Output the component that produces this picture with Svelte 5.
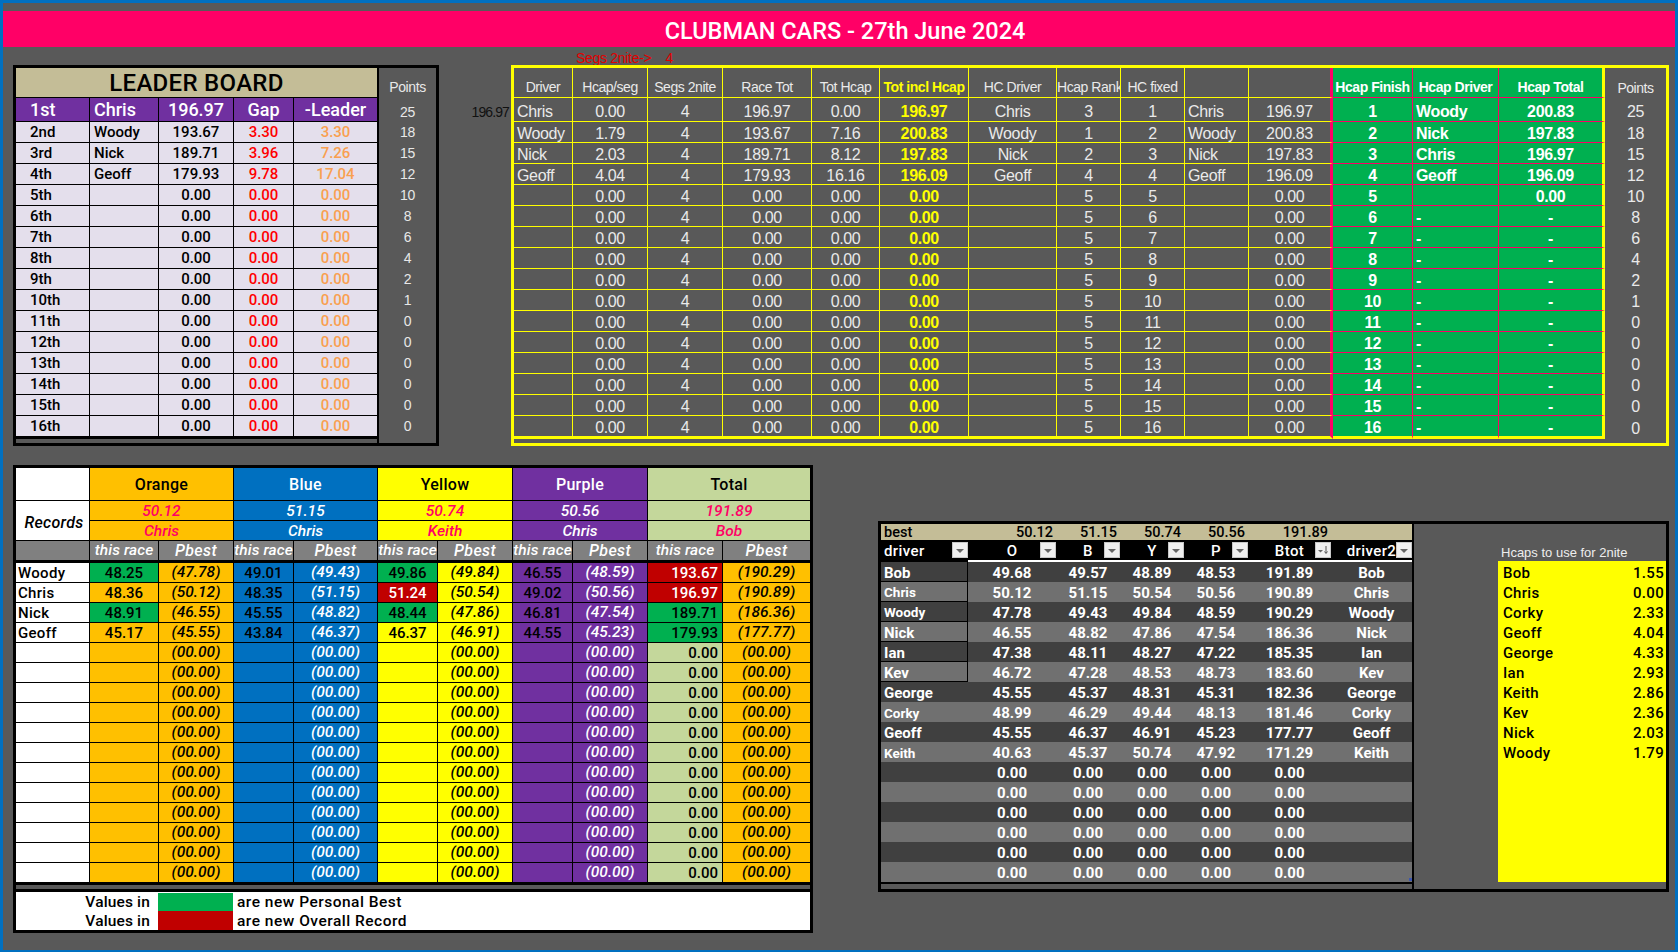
<script lang="ts">
    const names = ['Chris', 'Woody', 'Nick', 'Geoff']
    const pad = <T,>(list: T[], filler: T, size = 16): T[] => [...list, ...Array(size - list.length).fill(filler)]
    const points = [25, 18, 15, 12, 10, 8, 6, 4, 2, 1, 0, 0, 0, 0, 0, 0]
    const ordinals = ['2nd', '3rd', '4th', '5th', '6th', '7th', '8th', '9th', '10th', '11th', '12th', '13th', '14th', '15th', '16th']

    const leaders = pad(
        [
            ['Woody', '193.67', '3.30', '3.30'],
            ['Nick', '189.71', '3.96', '7.26'],
            ['Geoff', '179.93', '9.78', '17.04']
        ],
        ['', '0.00', '0.00', '0.00'],
        15
    )

    const hcapRows = pad(
        [
            { seg: '0.00', race: '196.97', tot: '0.00', incl: '196.97', rank: 3, sorted: '196.97', fin: 'Woody', finTot: '200.83' },
            { seg: '1.79', race: '193.67', tot: '7.16', incl: '200.83', rank: 1, sorted: '200.83', fin: 'Nick', finTot: '197.83' },
            { seg: '2.03', race: '189.71', tot: '8.12', incl: '197.83', rank: 2, sorted: '197.83', fin: 'Chris', finTot: '196.97' },
            { seg: '4.04', race: '179.93', tot: '16.16', incl: '196.09', rank: 4, sorted: '196.09', fin: 'Geoff', finTot: '196.09' },
            { seg: '0.00', race: '0.00', tot: '0.00', incl: '0.00', rank: 5, sorted: '0.00', fin: '', finTot: '0.00' }
        ],
        { seg: '0.00', race: '0.00', tot: '0.00', incl: '0.00', rank: 5, sorted: '0.00', fin: '-', finTot: '-' }
    )

    const hcapHeads = ['Driver', 'Hcap/seg', 'Segs 2nite', 'Race Tot', 'Tot Hcap', 'Tot incl Hcap', 'HC Driver', 'Hcap Rank', 'HC fixed', '', '']

    const tracks = [
        { key: 'orange', label: 'Orange', record: '50.12', holder: 'Chris' },
        { key: 'blue', label: 'Blue', record: '51.15', holder: 'Chris' },
        { key: 'yellow', label: 'Yellow', record: '50.74', holder: 'Keith' },
        { key: 'purple', label: 'Purple', record: '50.56', holder: 'Chris' },
        { key: 'total', label: 'Total', record: '191.89', holder: 'Bob' }
    ]

    // g = new personal best, r = new overall record
    const raceRows = pad(
        [
            { name: 'Woody', cells: [['48.25', 'g', '(47.78)'], ['49.01', '', '(49.43)'], ['49.86', 'g', '(49.84)'], ['46.55', '', '(48.59)'], ['193.67', 'r', '(190.29)']] },
            { name: 'Chris', cells: [['48.36', '', '(50.12)'], ['48.35', '', '(51.15)'], ['51.24', 'r', '(50.54)'], ['49.02', '', '(50.56)'], ['196.97', 'r', '(190.89)']] },
            { name: 'Nick', cells: [['48.91', 'g', '(46.55)'], ['45.55', '', '(48.82)'], ['48.44', 'g', '(47.86)'], ['46.81', '', '(47.54)'], ['189.71', 'g', '(186.36)']] },
            { name: 'Geoff', cells: [['45.17', '', '(45.55)'], ['43.84', '', '(46.37)'], ['46.37', '', '(46.91)'], ['44.55', '', '(45.23)'], ['179.93', 'g', '(177.77)']] }
        ],
        { name: '', cells: [['', '', '(00.00)'], ['', '', '(00.00)'], ['', '', '(00.00)'], ['', '', '(00.00)'], ['0.00', '', '(00.00)']] }
    )

    const bestHeads = ['O', 'B', 'Y', 'P', 'Btot']
    const bestValues = ['50.12', '51.15', '50.74', '50.56', '191.89']
    const bestRows = pad(
        [
            { name: 'Bob', vals: ['49.68', '49.57', '48.89', '48.53', '191.89'], boxed: true },
            { name: 'Chris', vals: ['50.12', '51.15', '50.54', '50.56', '190.89'], boxed: true, small: true },
            { name: 'Woody', vals: ['47.78', '49.43', '49.84', '48.59', '190.29'], boxed: true, small: true },
            { name: 'Nick', vals: ['46.55', '48.82', '47.86', '47.54', '186.36'], boxed: true },
            { name: 'Ian', vals: ['47.38', '48.11', '48.27', '47.22', '185.35'], boxed: true },
            { name: 'Kev', vals: ['46.72', '47.28', '48.53', '48.73', '183.60'], boxed: true },
            { name: 'George', vals: ['45.55', '45.37', '48.31', '45.31', '182.36'] },
            { name: 'Corky', vals: ['48.99', '46.29', '49.44', '48.13', '181.46'], small: true },
            { name: 'Geoff', vals: ['45.55', '46.37', '46.91', '45.23', '177.77'] },
            { name: 'Keith', vals: ['40.63', '45.37', '50.74', '47.92', '171.29'], small: true }
        ],
        { name: '', vals: ['0.00', '0.00', '0.00', '0.00', '0.00'] }
    )

    const hcaps = [
        ['Bob', '1.55'], ['Chris', '0.00'], ['Corky', '2.33'], ['Geoff', '4.04'], ['George', '4.33'],
        ['Ian', '2.93'], ['Keith', '2.86'], ['Kev', '2.36'], ['Nick', '2.03'], ['Woody', '1.79']
    ]
</script>

{#snippet filter(sorted = false)}
    <span class="filter">
        <svg width="14" height="14" viewBox="0 0 14 14">
            {#if sorted}
                <path d="M2 7h5L4.5 9.5z" fill="#666" />
                <path d="M10 3v7M8.5 8.5 10 10.5l1.5-2" fill="none" stroke="#555" stroke-width="1" />
            {:else}
                <path d="M3 6h8L7 10z" fill="#666" />
            {/if}
        </svg>
    </span>
{/snippet}

<main class="sheet">
    <header class="title">CLUBMAN CARS - 27th June 2024</header>
    <div class="segs"><span>Segs 2nite-&gt;</span><span class="segs-count">4</span></div>

    <section class="top-row">
        <div class="board">
            <div class="board-main">
                <table class="grid leader">
                    <colgroup><col /><col /><col /><col /><col /></colgroup>
                    <tbody>
                        <tr class="leader-title"><td colspan="5">LEADER BOARD</td></tr>
                        <tr class="leader-first">
                            <td class="pos">1st</td><td class="who">Chris</td><td>196.97</td><td>Gap</td><td>-Leader</td>
                        </tr>
                        {#each leaders as row, i}
                            <tr>
                                <td class="pos">{ordinals[i]}</td>
                                <td class="who">{row[0]}</td>
                                <td>{row[1]}</td>
                                <td class="gap">{row[2]}</td>
                                <td class="behind">{row[3]}</td>
                            </tr>
                        {/each}
                    </tbody>
                </table>
            </div>
            <div class="points">
                <div class="points-head">Points</div>
                {#each points as p, i}
                    <div class="points-cell" class:first={i === 0}>{p}</div>
                {/each}
            </div>
        </div>

        <div class="stray">196.97</div>

        <div class="hcap">
            <table class="grid hcap-table">
                <colgroup>
                    <col /><col /><col /><col /><col /><col /><col /><col /><col /><col /><col /><col /><col /><col /><col />
                </colgroup>
                <tbody>
                    <tr class="hcap-head">
                        {#each hcapHeads as head, i}
                            <td class:hot={i === 5}>{head}</td>
                        {/each}
                        <td class="fin">Hcap Finish</td>
                        <td class="fin">Hcap Driver</td>
                        <td class="fin">Hcap Total</td>
                        <td class="pts">Points</td>
                    </tr>
                    {#each hcapRows as row, i}
                        <tr class:first={i === 0}>
                            <td class="left">{names[i] ?? ''}</td>
                            <td>{row.seg}</td>
                            <td>4</td>
                            <td>{row.race}</td>
                            <td>{row.tot}</td>
                            <td class="hot">{row.incl}</td>
                            <td>{names[i] ?? ''}</td>
                            <td>{row.rank}</td>
                            <td>{i + 1}</td>
                            <td class="left">{names[i] ?? ''}</td>
                            <td>{row.sorted}</td>
                            <td class="fin">{i + 1}</td>
                            <td class="fin left">{row.fin}</td>
                            <td class="fin">{row.finTot}</td>
                            <td class="pts">{points[i]}</td>
                        </tr>
                    {/each}
                </tbody>
            </table>
        </div>
    </section>

    <section class="bottom-row">
        <div class="records">
            <table class="grid race">
                <colgroup>
                    <col /><col /><col /><col /><col /><col /><col /><col /><col /><col /><col />
                </colgroup>
                <tbody>
                    <tr class="track-head">
                        <td></td>
                        {#each tracks as t}
                            <td colspan="2" class={t.key}>{t.label}</td>
                        {/each}
                    </tr>
                    <tr class="track-record">
                        <td rowspan="2" class="records-label">Records</td>
                        {#each tracks as t}
                            <td colspan="2" class={t.key}>{t.record}</td>
                        {/each}
                    </tr>
                    <tr class="track-record">
                        {#each tracks as t}
                            <td colspan="2" class={t.key}>{t.holder}</td>
                        {/each}
                    </tr>
                    <tr class="sub-head">
                        <td></td>
                        {#each tracks as t}
                            <td class="sub-now">this race</td><td>Pbest</td>
                        {/each}
                    </tr>
                    {#each raceRows as row}
                        <tr class="race-row">
                            <td class="racer">{row.name}</td>
                            {#each tracks as t, k}
                                <td class="{t.key} now" class:pb={row.cells[k][1] === 'g'} class:rec={row.cells[k][1] === 'r'}>{row.cells[k][0]}</td>
                                <td class="{k === 4 ? 'orange' : t.key} best">{row.cells[k][2]}</td>
                            {/each}
                        </tr>
                    {/each}
                </tbody>
            </table>
            <div class="strip"></div>
            <div class="legend">
                <div class="legend-row">
                    <span class="legend-label">Values in</span><span class="swatch green"></span><span>are new Personal Best</span>
                </div>
                <div class="legend-row">
                    <span class="legend-label">Values in</span><span class="swatch red"></span><span>are new Overall Record</span>
                </div>
            </div>
        </div>

        <div class="bests">
            <div class="bests-main">
                <table class="grid best-table">
                    <colgroup><col /><col /><col /><col /><col /><col /><col /></colgroup>
                    <tbody>
                        <tr class="best-top">
                            <td class="left">best</td>
                            {#each bestValues as v}<td>{v}</td>{/each}
                            <td></td>
                        </tr>
                        <tr class="best-head">
                            <td class="left">driver{@render filter()}</td>
                            {#each bestHeads as head}
                                <td>{head}{@render filter(head === 'Btot')}</td>
                            {/each}
                            <td>driver2{@render filter()}</td>
                        </tr>
                        {#each bestRows as row}
                            <tr class="best-row">
                                <td class="left" class:boxed={row.boxed} class:small={row.small}>{row.name}</td>
                                {#each row.vals as v}<td>{v}</td>{/each}
                                <td>{row.name}</td>
                            </tr>
                        {/each}
                    </tbody>
                </table>
                <span class="resize-handle"></span>
            </div>
            <div class="hcaps">
                <div class="hcaps-label">Hcaps to use for 2nite</div>
                <div class="hcaps-list">
                    {#each hcaps as [name, value]}
                        <div class="hcaps-row"><span>{name}</span><span>{value}</span></div>
                    {/each}
                </div>
            </div>
        </div>
    </section>
</main>

<style>
    :global(body) {
        margin: 0;
        background: #595959;
    }

    .sheet {
        box-sizing: border-box;
        width: 1678px;
        height: 952px;
        border: solid #0070c0;
        border-width: 3px 3px 2px 3px;
        background: #595959;
        font-family: Roboto, 'Liberation Sans', sans-serif;
        overflow: hidden;
    }

    .title {
        box-sizing: border-box;
        height: 36px;
        margin-top: 8px;
        padding-left: 12px;
        background: #ff0066;
        color: #fff;
        font-size: 23.5px;
        font-weight: 500;
        line-height: 40px;
        overflow: hidden;
        text-align: center;
    }

    .segs {
        display: flex;
        height: 18px;
        padding-left: 573px;
        color: #e00000;
        font-family: 'Liberation Sans', sans-serif;
        font-size: 14px;
        letter-spacing: -0.3px;
        line-height: 22px;
    }

    .segs-count {
        margin-left: 14px;
    }

    .top-row,
    .bottom-row {
        display: flex;
        align-items: flex-start;
        padding-left: 10px;
    }

    .bottom-row {
        margin-top: 19px;
    }

    /* shared spreadsheet table */
    .grid {
        table-layout: fixed;
        border-collapse: separate;
        border-spacing: 0;
    }

    .grid td {
        box-sizing: border-box;
        padding: 0;
        overflow: hidden;
        line-height: 1;
        text-align: center;
        vertical-align: middle;
        white-space: nowrap;
    }

    .grid .left {
        padding-left: 3px;
        text-align: left;
    }

    /* leader board */
    .board {
        display: flex;
        box-sizing: border-box;
        width: 426px;
        height: 381px;
        border: 3px solid #000;
    }

    .board-main {
        width: 361px;
        height: 371px;
    }

    .leader {
        width: 361px;
        background: #e4dfec;
        color: #000;
        font-size: 15px;
        font-weight: 500;
    }

    .leader col:nth-child(1) { width: 74px; }
    .leader col:nth-child(2) { width: 69px; }
    .leader col:nth-child(3) { width: 75px; }
    .leader col:nth-child(4) { width: 60px; }
    .leader col:nth-child(5) { width: 83px; }

    .leader td {
        height: 21px;
        padding-top: 1px;
        border-right: 1px solid #000;
        border-bottom: 1px solid #000;
    }

    .leader td:last-child {
        border-right: 0;
    }

    .leader tr:last-child td {
        height: 23px;
        border-bottom-width: 3px;
    }

    .leader .pos {
        padding-left: 14px;
        text-align: left;
    }

    .leader .who {
        padding-left: 4px;
        text-align: left;
    }

    .leader .gap {
        color: #ff0000;
    }

    .leader .behind {
        color: #f9a050;
    }

    .leader-title td {
        height: 30px;
        background: #c4bd97;
        font-size: 24px;
        font-weight: 500;
        letter-spacing: 0.3px;
    }

    .leader-first td {
        height: 24px;
        background: #7030a0;
        color: #fff;
        font-size: 18px;
    }

    .points {
        box-sizing: border-box;
        width: 60px;
        margin-left: 0;
        border-left: 2px solid #000;
        color: #e8e8e8;
        font-family: 'Liberation Sans', sans-serif;
        font-size: 14px;
        letter-spacing: -0.4px;
        text-align: center;
    }

    .points-head {
        height: 30px;
        line-height: 38px;
    }

    .points-cell {
        height: 21px;
        line-height: 21px;
    }

    .points-cell.first {
        height: 24px;
        line-height: 28px;
    }

    .stray {
        box-sizing: border-box;
        width: 72px;
        padding: 39px 2px 0 0;
        color: #111;
        font-family: 'Liberation Sans', sans-serif;
        font-size: 14px;
        letter-spacing: -0.9px;
        text-align: right;
    }

    /* handicap board */
    .hcap {
        box-sizing: border-box;
        width: 1158px;
        height: 381px;
        border: 3px solid #ffff00;
    }

    .hcap-table {
        width: 1152px;
        color: #eaeaea;
        font-family: 'Liberation Sans', sans-serif;
        font-size: 16px;
        letter-spacing: -0.35px;
    }

    .hcap-table col:nth-child(1) { width: 59px; }
    .hcap-table col:nth-child(2) { width: 75px; }
    .hcap-table col:nth-child(3) { width: 75px; }
    .hcap-table col:nth-child(4) { width: 89px; }
    .hcap-table col:nth-child(5) { width: 68px; }
    .hcap-table col:nth-child(6) { width: 89px; }
    .hcap-table col:nth-child(7) { width: 88px; }
    .hcap-table col:nth-child(8) { width: 64px; }
    .hcap-table col:nth-child(9) { width: 64px; }
    .hcap-table col:nth-child(10) { width: 64px; }
    .hcap-table col:nth-child(11) { width: 84px; }
    .hcap-table col:nth-child(12) { width: 80px; }
    .hcap-table col:nth-child(13) { width: 86px; }
    .hcap-table col:nth-child(14) { width: 106px; }
    .hcap-table col:nth-child(15) { width: 61px; }

    .hcap-table td {
        height: 21px;
        padding-top: 3px;
        border-right: 1px solid #ffff00;
        border-bottom: 1px solid #ffff00;
    }

    .hcap-table tr:last-child td {
        height: 23px;
        border-bottom-width: 3px;
    }

    .hcap-table td:nth-child(11) {
        border-right: 3px solid #ff0066;
    }

    .hcap-table tr:last-child td:nth-child(11) {
        border-bottom-color: #ffff00;
    }

    .hcap-table .fin {
        border-color: #ff0066;
        background: #00b050;
        color: #fff;
        font-weight: 700;
    }

    .hcap-table td.fin:nth-child(14) {
        border-right: 3px solid #ffff00;
    }

    .hcap-table tr:last-child .fin {
        border-bottom-color: #ffff00;
    }

    .hcap-table td.pts,
    .hcap-table tr:last-child td.pts {
        border: 0;
    }

    .hcap-table .hot {
        color: #ffff00;
        font-weight: 700;
    }

    .hcap-table .hcap-head td {
        height: 30px;
        padding-top: 9px;
        font-size: 14px;
        letter-spacing: -0.45px;
    }

    .hcap-table .first td {
        height: 24px;
        padding-top: 4px;
    }

    /* records table */
    .records {
        box-sizing: border-box;
        width: 800px;
        height: 468px;
        border: 3px solid #000;
        background: #fff;
    }

    .race {
        width: 794px;
        color: #000;
        font-size: 15px;
        font-weight: 500;
    }

    .race col:nth-child(1) { width: 74px; }
    .race col:nth-child(2) { width: 69px; }
    .race col:nth-child(3) { width: 75px; }
    .race col:nth-child(4) { width: 60px; }
    .race col:nth-child(5) { width: 84px; }
    .race col:nth-child(6) { width: 60px; }
    .race col:nth-child(7) { width: 75px; }
    .race col:nth-child(8) { width: 60px; }
    .race col:nth-child(9) { width: 75px; }
    .race col:nth-child(10) { width: 75px; }
    .race col:nth-child(11) { width: 87px; }

    .race td {
        height: 20px;
        padding-top: 1px;
        border-right: 1px solid #000;
        border-bottom: 1px solid #000;
    }

    .race td:last-child {
        border-right: 0;
    }

    .race .orange { background: #ffc000; }
    .race .blue { background: #0070c0; }
    .race .yellow { background: #ffff00; }
    .race .purple { background: #7030a0; }
    .race .total { background: #c4d79b; }

    .race tr:last-child td {
        height: 22px;
        border-bottom-width: 3px;
    }

    .track-head td {
        height: 33px;
        font-size: 16px;
        letter-spacing: 0.3px;
    }

    .track-head .blue,
    .track-head .purple {
        color: #fff;
    }

    .race .track-record td {
        padding-top: 3px;
        color: #ff0066;
        font-size: 15.5px;
        font-style: italic;
    }

    .race .track-record .blue,
    .race .track-record .purple {
        color: #fff;
    }

    .race .track-record .records-label {
        padding: 4px 0 0 3px;
        background: #fff;
        color: #000;
        font-size: 16px;
        letter-spacing: 0.3px;
    }

    .sub-head td {
        height: 22px;
        border-bottom-width: 3px;
        background: #808080;
        color: #fff;
        font-size: 16px;
        font-style: italic;
        letter-spacing: 0.4px;
    }

    /* keeps the wider text inside its 60px columns */
    .race .sub-head .sub-now {
        font-size: 15.5px;
        letter-spacing: 0.1px;
    }

    .race .racer {
        padding-left: 2px;
        text-align: left;
        letter-spacing: 0.3px;
    }

    .race .best {
        font-size: 15.5px;
        font-style: italic;
    }

    .race .blue.best,
    .race .purple.best {
        color: #fff;
    }

    .race .total.now {
        padding-right: 4px;
        text-align: right;
    }

    .race td.pb {
        background: #00b050;
    }

    .race td.rec {
        background: #c00000;
        color: #fff;
    }

    .strip {
        height: 4px;
        border-bottom: 3px solid #000;
        background: #595959;
    }

    .legend {
        padding-top: 1px;
        font-size: 15.5px;
        font-weight: 500;
        letter-spacing: 0.5px;
    }

    .legend-row {
        display: flex;
        align-items: center;
        height: 19px;
    }

    .legend-row:first-child {
        height: 18px;
    }

    .legend-label {
        box-sizing: border-box;
        width: 142px;
        padding-right: 8px;
        letter-spacing: 0.15px;
        text-align: right;
    }

    .swatch {
        width: 75px;
        height: 100%;
        margin-right: 4px;
    }

    .swatch.green { background: #00b050; }
    .swatch.red { background: #c00000; }

    /* best times */
    .bests {
        display: flex;
        box-sizing: border-box;
        width: 791px;
        height: 371px;
        margin: 56px 0 0 65px;
        border: 3px solid #000;
    }

    .bests-main {
        position: relative;
        box-sizing: border-box;
        width: 533px;
        height: 365px;
        border-right: 2px solid #000;
    }

    .best-table {
        width: 531px;
        color: #fff;
        font-size: 15px;
        font-weight: 700;
    }

    .best-table col:nth-child(1) { width: 87px; }
    .best-table col:nth-child(2) { width: 88px; }
    .best-table col:nth-child(3) { width: 64px; }
    .best-table col:nth-child(4) { width: 64px; }
    .best-table col:nth-child(5) { width: 64px; }
    .best-table col:nth-child(6) { width: 83px; }
    .best-table col:nth-child(7) { width: 81px; }

    .best-table td {
        position: relative;
        height: 20px;
        padding-top: 3px;
    }

    .best-table .best-top td {
        height: 16px;
        padding: 2px 3px 0 0;
        background: #c4bd97;
        color: #000;
        font-size: 14.5px;
        font-weight: 500;
        line-height: 14px;
        text-align: right;
    }

    .best-table .best-top td:first-child {
        padding-left: 3px;
        text-align: left;
    }

    .best-table .best-head td {
        height: 22px;
        border-bottom: 2px solid #fff;
        background: #000;
        font-weight: 500;
        letter-spacing: 0.4px;
    }

    .best-table .best-head td:first-child {
        border-bottom-color: #000;
    }

    .best-row:nth-child(odd) td {
        background: #404040;
    }

    .best-row:nth-child(even) td {
        background: #707070;
    }

    .best-table td.boxed {
        border-right: 1px solid #000;
        border-bottom: 1px solid #000;
    }

    .best-table td.small {
        font-size: 13.5px;
    }

    .best-row:last-child td {
        height: 22px;
        border-bottom: 2px solid #000;
    }

    .filter {
        position: absolute;
        top: 2px;
        right: 0;
        display: flex;
        box-sizing: border-box;
        width: 16px;
        height: 16px;
        align-items: center;
        justify-content: center;
        border: 1px solid #c8c8c8;
        background: #f0f0f0;
    }

    .resize-handle {
        position: absolute;
        right: 0;
        bottom: 8px;
        width: 3px;
        height: 3px;
        background: #3b55b0;
    }

    .hcaps {
        box-sizing: border-box;
        width: 252px;
        padding-left: 84px;
    }

    .hcaps-label {
        height: 37px;
        padding: 21px 0 0 3px;
        box-sizing: border-box;
        color: #eee;
        font-family: 'Liberation Sans', sans-serif;
        font-size: 13px;
        line-height: 15px;
    }

    .hcaps-list {
        box-sizing: border-box;
        height: 321px;
        padding-top: 2px;
        background: #ffff00;
        color: #000;
        font-size: 15px;
        font-weight: 500;
        letter-spacing: 0.3px;
    }

    .hcaps-row {
        display: flex;
        justify-content: space-between;
        height: 20px;
        padding: 0 2px 0 5px;
        line-height: 20px;
    }
</style>
